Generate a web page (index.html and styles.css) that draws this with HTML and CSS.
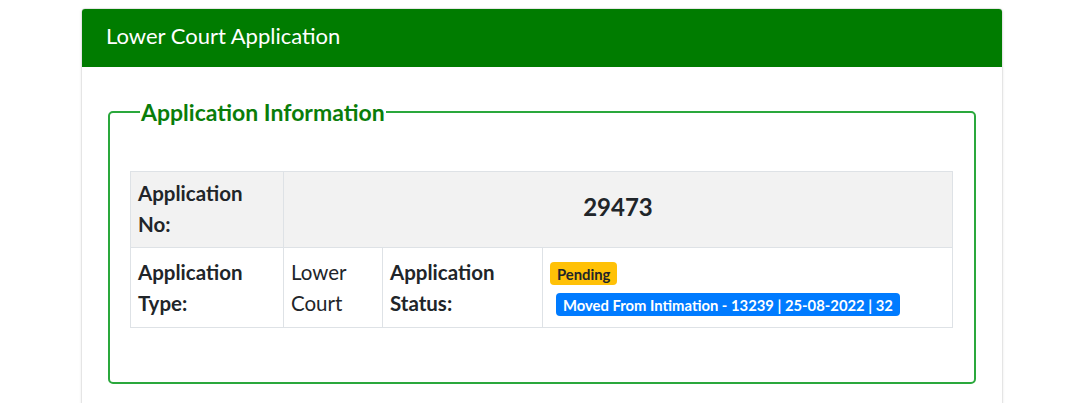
FILE: index.html
```html
<!DOCTYPE html>
<html>
<head>
<meta charset="utf-8">
<link rel="stylesheet" href="styles.css">
</head>
<body>
<div class="card">
  <div class="card-header">Lower Court Application</div>
  <div class="card-body">
    <fieldset class="info">
      <legend>Application Information</legend>
      <table class="info-table">
        <colgroup>
          <col class="c1"><col class="c2"><col class="c3"><col class="c4">
        </colgroup>
        <tr class="shaded">
          <th>Application No:</th>
          <td colspan="3" class="app-no">29473</td>
        </tr>
        <tr class="row2">
          <th>Application Type:</th>
          <td>Lower Court</td>
          <th>Application Status:</th>
          <td class="status">
            <span class="badge badge-warning">Pending</span><br>
            <span class="badge badge-primary">Moved From Intimation - 13239 | 25-08-2022 | 32</span>
          </td>
        </tr>
      </table>
    </fieldset>
  </div>
</div>
</body>
</html>
```
FILE: styles.css
```css
html, body {
  margin: 0;
  padding: 0;
  background: #ffffff;
}
body {
  font-family: Lato, "Liberation Sans", sans-serif;
  color: #212529;
}
.card {
  margin: 8px 0 0 81px;
  width: 922px;
  height: 420px;
  border: 1px solid rgba(0, 0, 0, 0.1);
  border-radius: 4px;
  box-shadow: 0 1px 3px rgba(0, 0, 0, 0.08);
  box-sizing: border-box;
  overflow: hidden;
}
.card-header {
  background: #007c00;
  color: #ffffff;
  height: 59px;
  line-height: 55px;
  padding-left: 25px;
  font-size: 22px;
  margin: -1px -1px 0 -1px;
}
.card-body {
  padding: 32px 26px 0 26px;
}
.info {
  margin: 0;
  border: 2px solid #2aa83c;
  border-radius: 5px;
  padding: 46px 21px 54px 20px;
}
.info legend {
  color: #0a7d0a;
  font-weight: 700;
  font-size: 23px;
  padding: 0 1px;
  margin-left: 10px;
  line-height: 26px;
}
.info-table {
  width: 100%;
  border-collapse: collapse;
  font-size: 20.5px;
  line-height: 31px;
}
.c1 { width: 153px; }
.c2 { width: 99px; }
.c3 { width: 160px; }
.info-table th,
.info-table td {
  border: 1px solid #dee2e6;
  text-align: left;
  vertical-align: top;
  padding: 6px 7px 7px 7px;
}
.info-table .row2 th,
.info-table .row2 td {
  padding: 9px 7px 8px 7px;
}
.info-table th {
  font-weight: 700;
}
.shaded {
  background: #f2f2f2;
}
.app-no {
  text-align: center !important;
  font-weight: 700;
  font-size: 24px;
  vertical-align: middle !important;
  padding-bottom: 12px !important;
}
.status {
  line-height: 31px;
}
.badge {
  display: inline-block;
  font-size: 14.8px;
  font-weight: 700;
  line-height: 18px;
  padding: 3px 7px 2px;
  border-radius: 4px;
}
.badge-warning {
  background: #ffc107;
  color: #212529;
}
.badge-primary {
  background: #007bff;
  color: #ffffff;
  margin-left: 6px;
}
```
